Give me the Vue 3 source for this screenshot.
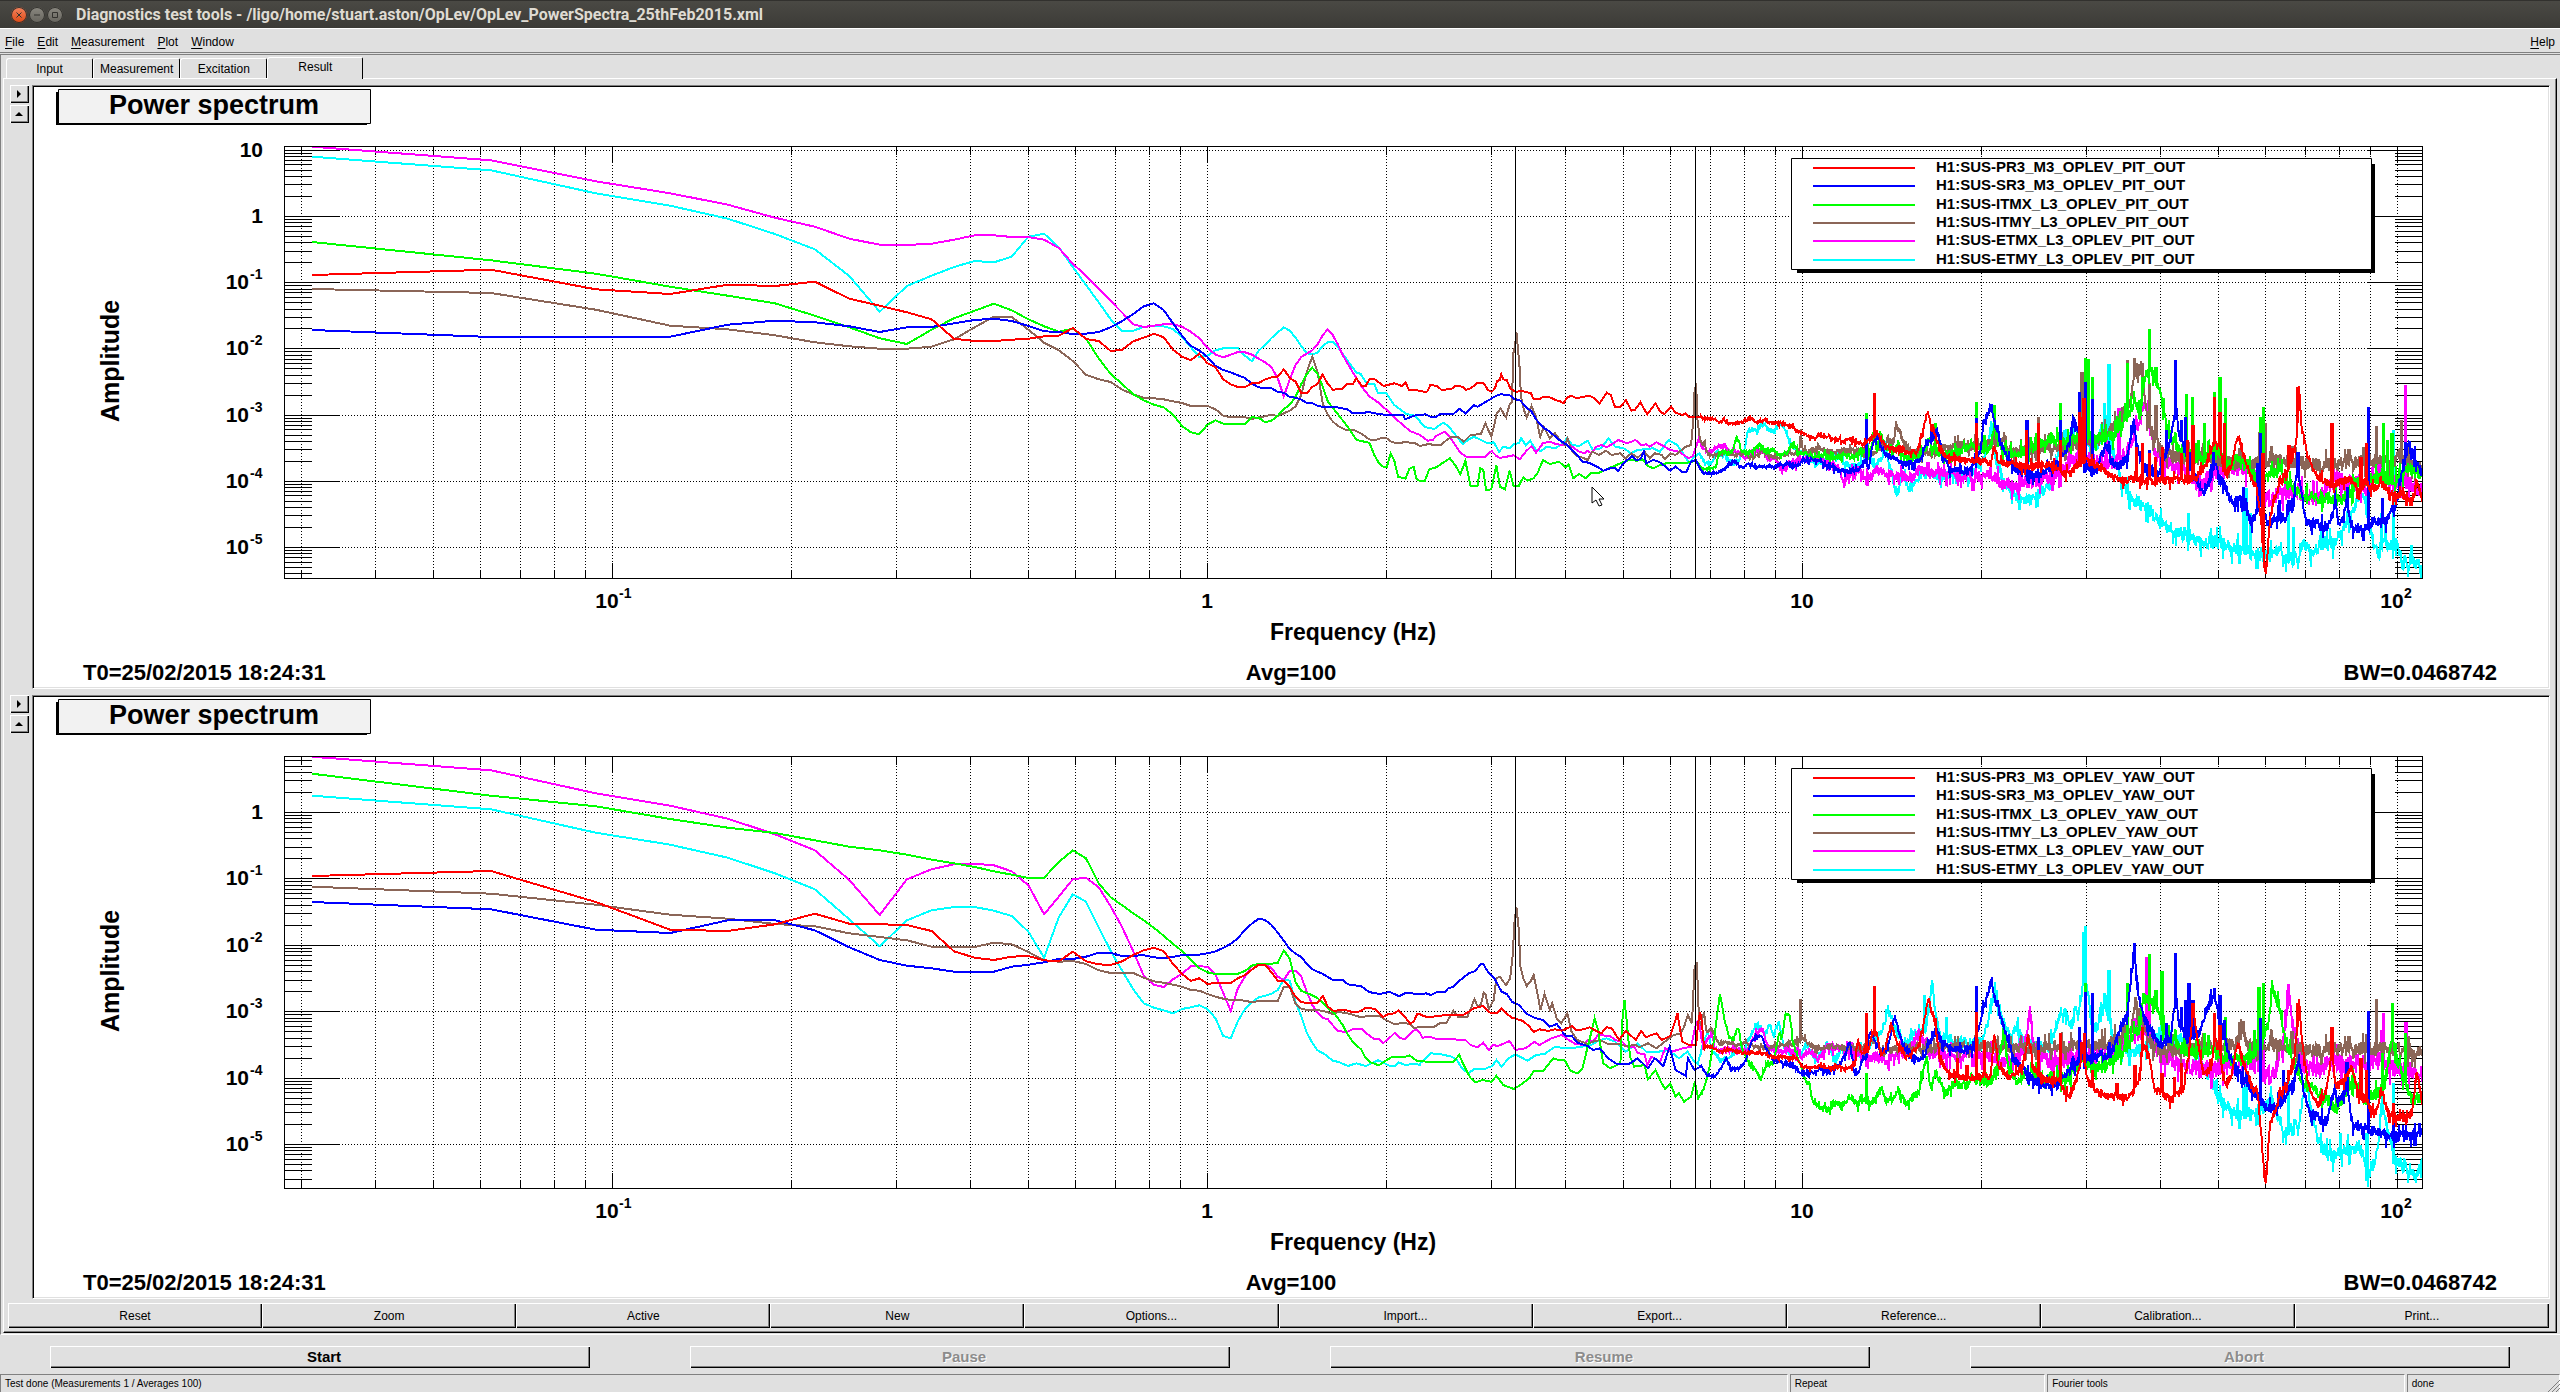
<template>
  <div class="window">
    <header class="titlebar">
      <button type="button" class="wm wm-close" aria-label="Close">
        <svg viewBox="0 0 16 16"><path d="M5.5 5.5l5 5M10.5 5.5l-5 5" /></svg>
      </button>
      <button type="button" class="wm" aria-label="Minimize">
        <svg viewBox="0 0 16 16"><path d="M5 8h6" /></svg>
      </button>
      <button type="button" class="wm" aria-label="Maximize">
        <svg viewBox="0 0 16 16"><path d="M5.500 5.500h5v5h-5z" /></svg>
      </button>
      <h1>Diagnostics test tools - /ligo/home/stuart.aston/OpLev/OpLev_PowerSpectra_25thFeb2015.xml</h1>
    </header>

    <nav class="menubar">
      <button v-for="m in menus" :key="m" type="button"><u>{{ m[0] }}</u>{{ m.slice(1) }}</button>
      <button type="button" class="help"><u>H</u>elp</button>
    </nav>

    <main class="work">
      <div class="tabs" role="tablist">
        <button
          v-for="t in tabs"
          :key="t"
          type="button"
          role="tab"
          :aria-selected="t === tab"
          :class="['tab', { active: t === tab }]"
          @click="tab = t"
        >
          {{ t }}
        </button>
      </div>

      <section class="panel">
        <div v-for="plot in plots" :key="plot.axis" class="row">
          <div class="side">
            <button type="button" class="bevel" aria-label="Expand right">
              <svg viewBox="0 0 19 18"><path d="M7 5v8l4-4z" /></svg>
            </button>
            <button type="button" class="bevel" aria-label="Expand up">
              <svg viewBox="0 0 19 18"><path d="M5 11h8L9 7z" /></svg>
            </button>
          </div>

          <div class="canvas">
            <svg viewBox="34 87 2514 600" role="img" :aria-label="'Power spectrum ' + plot.axis">
              <g class="title">
                <path class="shade" d="M56 92h311v33H56z" />
                <path class="box" d="M58.500 89.500h312v34h-312z" />
                <text x="214" y="114" text-anchor="middle">Power spectrum</text>
              </g>

              <g class="crisp">
                <path class="grid" :d="plot.grid" />
                <path class="frame" :d="plot.ticks" />
                <path
                  v-for="s in plot.traces"
                  :key="s.name"
                  class="trace"
                  :stroke="s.color"
                  :d="s.d"
                />
                <path class="frame" d="M1515.500 146V579M1695.500 146V579" />
                <path class="frame" d="M284.500 146.500H2422.500V578.500H284.500z" />
              </g>

              <g class="axis">
                <text v-for="l in plot.yLabels" :key="l.y" :x="l.sup ? 249 : 263" :y="l.y + 7" text-anchor="end">{{ l.text }}</text>
                <text v-for="l in plot.yLabels.filter((v) => v.sup)" :key="l.sup" class="sup" x="250" :y="l.y - 3">{{ l.sup }}</text>
                <text x="607" y="608" text-anchor="middle">10</text>
                <text class="sup" x="619" y="598">-1</text>
                <text x="1207" y="608" text-anchor="middle">1</text>
                <text x="1802" y="608" text-anchor="middle">10</text>
                <text x="2392" y="608" text-anchor="middle">10</text>
                <text class="sup" x="2404" y="598">2</text>
              </g>

              <g class="caption">
                <text class="name" x="1353" y="640" text-anchor="middle">Frequency (Hz)</text>
                <text class="name-y" transform="translate(119 361) rotate(-90)" text-anchor="middle">Amplitude</text>
                <text x="83" y="680">T0=25/02/2015 18:24:31</text>
                <text x="1291" y="680" text-anchor="middle">Avg=100</text>
                <text x="2497" y="680" text-anchor="end">BW=0.0468742</text>
              </g>

              <g class="legend">
                <path class="shade" d="M1797 164h578v109h-578z" />
                <path class="box" d="M1791.500 158.500h580v111h-580z" />
                <template v-for="(s, i) in plot.legend" :key="s.name">
                  <path class="trace crisp" :stroke="s.color" :d="`M1813 ${legendRows[i]}h102`" />
                  <text x="1936" :y="legendRows[i] + 4">{{ s.name }}</text>
                </template>
              </g>

              <path
                v-if="plot.axis === 'PIT'"
                class="pointer"
                d="M1592 487v16l4-3 3 6 3-1-3-6h5z"
              />
            </svg>
          </div>
        </div>

        <div class="tools">
          <button v-for="b in tools" :key="b" type="button" class="bevel">{{ b }}</button>
        </div>
      </section>
    </main>

    <div class="actions">
      <button type="button" class="bevel">Start</button>
      <button type="button" class="bevel" disabled>Pause</button>
      <button type="button" class="bevel" disabled>Resume</button>
      <button type="button" class="bevel" disabled>Abort</button>
    </div>

    <footer class="status">
      <span>Test done (Measurements 1 / Averages 100)</span>
      <span>Repeat</span>
      <span>Fourier tools</span>
      <span>done</span>
      <svg class="grip" viewBox="0 0 14 14"><path d="M2 14L14 2M6 14l8-8M10 14l4-4" /></svg>
    </footer>
  </div>
</template>

<script setup>
import { ref } from 'vue'

const menus = ['File', 'Edit', 'Measurement', 'Plot', 'Window']
const tabs = ['Input', 'Measurement', 'Excitation', 'Result']
const tab = ref('Result')
const tools = ['Reset', 'Zoom', 'Active', 'New', 'Options...', 'Import...', 'Export...', 'Reference...', 'Calibration...', 'Print...']

const channels = [
  { id: 'PR3_M3', color: '#ff0000' },
  { id: 'SR3_M3', color: '#0000ff' },
  { id: 'ITMX_L3', color: '#00ff00' },
  { id: 'ITMY_L3', color: '#8b6658' },
  { id: 'ETMX_L3', color: '#ff00ff' },
  { id: 'ETMY_L3', color: '#00ffff' }
]
const legendRows = [168, 186, 205, 223, 241, 260]

const DECADE = 595
const xOf = (f) => 1207.5 + DECADE * Math.log10(f)

// Each trace is: one value per 31.25 mHz bin up to 1.5 Hz, then x,y lists
// for the bands b, c and d, then narrow peaks in bands c and d.
const bands = {
  b: { x: 860, k: 2.8 },
  c: { x: 1400, k: 2.904 },
  d: { x: 1930, k: 2.487 }
}

const pit = [
  {
    low: '435 419 478 492 464 468 455 506 527 547 568 626 633 633 629 626 619 617 594 627 633 663 659 634 623 611 622 659 680 691 671 700 712 748 763 771 771 760 759 748 742 740 718 744 755 789 789 771',
    b: '1281,762 1295,734 1310,762 1324,779 1351,776 1364,763 1380,762 1390,745 1405,768 1416,768 1426,748 1440,747 1466,768 1496,760 1518,768 1527,757 1537,779 1568,782',
    c: '72,786 80,784 88,765 108,768 120,779 148,778 160,768 182,770 192,779 205,775 225,759 242,758 255,779 266,786 276,775 282,753 290,750 294,733 300,748 310,750 320,775 336,786 352,782 380,790 388,808 405,808 415,800 440,803 452,811 462,812 475,820 485,803 498,797 512,805 550,797 565,805 580,820 600,788 612,795 624,830 640,830 656,811 672,842 682,840 698,817 718,853 742,820 756,845 768,852 788,830 800,848 820,855 830,850 838,860 875,860 885,866 915,866 928,877 940,868 955,882 985,877 1000,872 1015,865 1035,876 1060,870 1080,880 1115,880 1130,888 1140,887 1150,900 1165,905 1175,912 1190,920 1205,927 1215,915 1230,922 1245,920 1262,930 1275,925 1285,935 1310,928 1325,940 1352,940 1368,925 1385,905 1395,925 1410,945 1430,955 1450,962 1470,965 1500,965 1512,930 1520,900 1532,845 1540,880 1545,905',
    d: '8,900 15,930 30,970 50,985 80,990 110,990 150,1000 160,940 170,998 200,1000 230,1010 260,1008 300,1000 330,1030 350,1030 370,1000 385,990 410,1005 430,1015 450,1040 480,1050 520,1050 560,1055 600,1050 640,1050 665,1040 680,1015 695,980 703,940 712,930 722,950 735,1040 750,1000 765,915 775,950 790,1020 810,1070 822,1150 834,1345 845,1180 855,1110 875,1050 895,1000 910,950 918,790 925,900 940,980 960,1030 985,1060 1010,1060 1045,1045 1065,1085 1080,1060 1100,1075 1128,1065 1150,1095 1180,1100 1205,1100 1212,1055 1224,1110',
    pc: '1377,790',
    pd: '116,880 240,900 269,878 325,930 371,845 376,860 383,805 513,950 528,940 545,970 561,980 578,950 625,970 640,930 654,885 692,970 708,800 721,845 733,880 828,970 893,945 915,772 1000,880 1072,980 1086,940',
    noise: 0.8
  },
  {
    low: '600 621 621 620 584 572 577 589 606 592 591 580 570 566 573 588 604 606 612 611 606 592 573 552 529 520 540 580 618 648 661 681 708 720 727 736 744 761 772 775 775 786 788 801 803 809 819 819',
    b: '1281,827 1296,831 1330,831 1364,838 1380,850 1400,850 1425,846 1450,852 1480,855 1520,855 1527,868 1550,857 1568,855',
    c: '75,853 88,860 105,860 118,852 155,852 172,836 190,850 215,826 225,830 250,815 262,808 278,798 292,793 318,795 330,806 350,812 362,827 382,845 395,868 415,892 435,905 460,928 485,945 510,970 530,995 548,998 572,1010 590,1022 610,1015 622,1013 634,1023 645,1005 660,990 675,978 685,990 698,988 708,965 715,1000 735,990 752,995 765,1005 785,1022 800,1010 820,1026 832,1025 845,995 860,990 870,1015 880,1030 920,1030 945,1015 960,1000 975,993 985,1010 1000,1010 1012,1000 1030,1010 1060,1012 1085,1008 1105,1005 1130,1000 1140,1010 1155,1005 1170,992 1205,988 1225,998 1240,1010 1270,1018 1300,1025 1320,1022 1340,1012 1350,990 1362,1010 1375,930 1390,920 1395,950 1410,975 1440,990 1470,1000 1495,1000 1515,985 1528,940',
    d: '5,930 18,905 30,970 50,1020 100,1025 125,960 135,870 150,835 160,870 175,940 195,990 220,1025 260,1035 290,1020 320,1000 345,950 360,870 368,900 385,1010 410,1030 425,990 437,935 450,990 470,1015 490,980 500,920 508,870 515,950 530,1010 570,1030 588,970 603,900 610,830 618,900 630,950 650,1020 680,1090 695,1050 710,1000 725,1050 750,1110 775,1110 800,1175 825,1110 840,1190 860,1160 885,1165 905,1100 915,1000 925,1100 935,1175 985,1190 1000,1160 1008,1110 1018,1200 1035,1120 1050,1190 1085,1200 1100,1170 1130,1180 1150,1140 1165,1090 1180,1000 1190,940 1205,980 1224,1040',
    pc: '1354,867 1545,900',
    pd: '116,865 241,870 325,870 371,785 386,755 405,808 546,960 588,900 610,690 625,870 636,860 644,965 705,965 779,1070 815,1000 822,910 870,1110 893,1110 915,965 1038,1070 1090,830 1126,1105 1183,935',
    noise: 1
  },
  {
    low: '336 391 431 470 497 520 557 592 625 642 599 565 542 521 541 568 589 605 596 626 685 732 762 793 811 824 832 854 888 907 913 884 871 881 881 881 881 862 863 877 872 857 838 824 800 762 732 713',
    b: '1281,731 1296,771 1310,815 1337,851 1364,888 1390,930 1426,938 1440,975 1452,998 1466,1011 1475,1011 1486,970 1496,992 1507,1040 1527,1046 1538,1017 1550,1010 1558,1045 1568,1054',
    c: '72,1052 85,1018 105,1012 125,998 145,985 160,1005 175,1032 190,993 205,1068 225,1068 233,1015 242,1020 250,1080 265,1078 280,1005 290,1070 305,1078 318,1022 330,1068 345,1068 358,1042 370,1052 388,1045 400,1028 415,990 435,1002 462,995 480,1012 490,1003 503,1045 520,1032 540,1045 555,1030 575,1030 600,1018 640,1000 665,990 690,992 705,988 720,1008 735,1015 755,1005 780,998 805,1000 835,998 860,992 880,1018 905,1015 918,1010 925,970 940,965 955,970 968,960 980,915 990,960 1005,970 1020,965 1045,945 1060,968 1085,960 1100,975 1125,970 1140,940 1155,970 1180,970 1205,985 1230,975 1260,985 1290,975 1320,985 1340,960 1365,970 1378,900 1385,960 1395,905 1410,950 1430,970 1445,935 1460,980 1485,985 1510,975 1525,960 1535,920',
    d: '5,950 30,975 60,970 95,955 130,960 150,960 160,880 180,960 200,970 240,965 270,940 300,925 340,940 360,925 395,920 430,925 455,920 470,890 485,860 500,840 510,820 525,830 535,740 550,710 565,770 575,800 590,900 610,950 640,970 680,990 700,970 720,970 740,1010 765,990 790,1010 815,1050 840,1040 870,1020 890,1060 930,1100 970,1105 1010,1110 1035,1100 1060,1060 1090,1050 1120,1040 1160,1050 1190,1010 1210,1030 1224,1030',
    pc: '1354,848',
    pd: '13,880 116,815 136,915 161,826 325,818 386,685 393,688 405,740 492,700 529,740 546,598 562,712 637,793 653,800 668,930 682,880 707,785 721,740 734,805 822,860 829,832 1128,880 1137,930 1149,910',
    noise: 1.2
  },
  {
    low: '477 489 539 587 598 616 637 649 656 656 650 628 592 560 561 599 638 661 693 734 748 756 779 793 803 805 808 814 819 828 827 828 838 857 862 861 862 867 862 859 854 858 850 842 829 795 725 680',
    b: '1281,725 1296,823 1310,855 1324,875 1340,889 1360,900 1385,901 1402,910 1426,928 1440,931 1462,923 1474,924 1490,937 1510,940 1525,936 1555,940 1568,948',
    c: '80,943 120,945 135,930 150,920 170,922 185,935 205,915 235,912 248,880 265,920 275,880 280,852 292,836 308,862 318,825 325,815 330,660 334,650 338,605 342,650 348,720 351,800 360,840 368,862 382,828 395,860 407,920 418,890 435,925 450,910 465,930 480,945 486,925 500,965 515,978 530,983 545,990 558,965 578,975 598,962 615,975 640,970 655,985 672,970 690,983 710,965 725,985 740,970 760,975 770,988 785,970 800,975 818,960 830,950 845,945 852,870 855,790 860,760 864,870 870,920 878,950 885,925 888,965 900,975 925,975 945,965 965,975 1000,970 1025,985 1050,965 1090,985 1115,975 1150,970 1160,960 1164,910 1170,960 1190,965 1215,950 1240,965 1270,965 1290,960 1320,965 1350,960 1375,975 1400,945 1415,930 1435,940 1440,880 1450,900 1462,935 1480,960 1510,975 1530,960',
    d: '5,970 40,955 90,945 130,950 180,930 195,970 240,960 280,950 330,950 380,945 430,920 460,890 480,850 498,820 508,740 518,710 530,760 540,860 555,920 575,960 610,980 680,985 740,1000 800,1000 880,990 940,1000 1000,1005 1060,1000 1100,990 1150,995 1170,980 1224,1020',
    pc: '',
    pd: '269,862 378,725 386,725 492,690 508,685 529,700 546,760 562,825 819,905 834,880 1078,950 1110,888 1173,870',
    noise: 1.3
  },
  {
    low: '50 91 154 190 224 263 290 326 344 345 341 329 316 316 321 321 329 354 401 437 476 513 548 583 591 587 583 582 590 605 625 653 674 682 674 666 667 674 686 697 712 745 799 748 705 681 671 661',
    b: '1281,643 1296,615 1309,599 1324,616 1337,641 1351,674 1377,722 1402,766 1426,799 1450,817 1474,839 1496,862 1518,883 1540,903 1568,915',
    c: '80,932 95,930 105,918 130,905 145,920 160,945 175,968 195,982 245,982 266,963 280,978 290,984 330,976 348,988 365,965 382,948 395,968 415,940 435,935 455,943 480,945 500,950 520,965 535,970 545,962 555,970 570,950 585,945 600,952 620,940 634,930 660,940 684,930 700,945 715,943 725,950 745,937 765,948 785,960 810,965 838,985 850,978 860,950 868,925 880,955 895,965 905,965 925,945 945,950 955,965 980,965 1000,985 1015,970 1040,960 1055,965 1070,990 1090,985 1105,1015 1125,1015 1140,990 1150,1005 1165,985 1200,985 1225,985 1240,1000 1260,1000 1275,1015 1288,1065 1300,1040 1330,1015 1345,1040 1370,1040 1385,1015 1400,1025 1420,1035 1450,1035 1490,1045 1510,1015 1530,1030',
    d: '5,1030 60,1030 110,1045 150,1030 180,1060 215,1070 250,1050 290,1045 330,1020 360,990 400,990 440,1000 470,990 500,950 520,880 535,820 548,900 560,970 590,1000 640,1020 670,1080 700,1030 740,1010 800,1020 830,1110 870,1090 910,1080 960,1110 1010,1050 1060,1060 1090,1080 1120,1020 1150,1060 1180,1050 1224,1080',
    pc: '',
    pd: '438,920 470,835 1100,1010 1128,880 1183,765',
    noise: 1.5
  },
  {
    low: '80 121 190 227 266 312 358 438 545 468 437 411 393 397 380 320 311 352 411 465 517 568 603 602 591 587 589 597 621 652 681 677 661 655 653 655 677 694 662 644 624 607 592 602 623 648 670 673',
    b: '1281,668 1296,647 1310,637 1324,636 1337,650 1364,690 1389,727 1402,732 1420,762 1440,762 1450,789 1474,790 1496,825 1530,852 1550,856 1568,872',
    c: '60,880 75,892 100,897 125,878 140,888 152,903 165,920 182,942 200,928 215,920 235,930 255,940 272,937 288,965 300,950 318,955 330,942 345,940 352,925 365,945 378,932 395,960 410,963 425,950 450,955 470,942 485,925 500,945 520,948 545,932 560,960 585,955 605,925 625,950 650,955 670,970 690,960 710,958 735,955 755,965 780,930 805,945 825,975 840,1000 855,980 870,970 885,1000 905,1000 920,965 945,980 965,1000 985,990 1000,960 1010,905 1025,895 1035,905 1048,885 1060,880 1072,900 1090,905 1100,878 1115,890 1125,920 1135,945 1150,960 1170,965 1190,985 1215,1000 1240,985 1270,975 1300,1005 1330,1010 1345,990 1360,960 1375,1010 1395,990 1410,955 1425,1010 1437,1080 1448,1085 1460,1020 1475,1075 1495,1060 1510,1035',
    d: '5,1030 20,1045 60,1030 100,1040 140,970 155,890 165,1000 185,1060 215,1100 245,1110 270,1090 300,1060 320,960 332,895 350,920 370,880 385,940 410,950 440,900 455,960 475,1050 505,1110 540,1130 575,1180 610,1200 650,1220 680,1240 720,1235 750,1255 780,1255 800,1270 850,1275 870,1250 885,1280 910,1285 930,1235 950,1270 975,1240 1005,1240 1030,1190 1055,1130 1070,1090 1085,1110 1095,1200 1115,1275 1130,1230 1145,1250 1160,1230 1175,1300 1195,1290 1215,1300 1224,1320',
    pc: '',
    pd: '377,790 433,820 445,703 642,1150 779,1090 786,1075 797,1150 892,1110 905,1190 1123,1150 1133,1180 1152,900 1198,1245',
    noise: 1.3
  }
]

const yaw = [
  {
    low: '408 393 486 569 573 553 521 551 553 555 573 634 653 660 650 648 661 664 635 664 673 675 664 645 631 623 633 672 702 723 715 732 729 729 729 715 705 689 674 675 697 722 722 742 771 786 789 789',
    b: '1281,789 1296,768 1310,800 1325,812 1360,810 1380,817 1402,814 1414,804 1440,806 1464,831 1480,822 1496,820 1508,811 1525,829 1540,851 1550,845 1560,823 1568,822',
    c: '62,825 80,832 110,828 140,824 185,824 215,805 240,798 262,818 282,818 295,805 308,820 325,833 355,842 375,858 388,876 405,868 430,873 450,868 470,872 500,858 510,870 535,868 550,862 575,875 585,880 600,862 615,865 636,900 655,873 685,900 700,873 715,892 730,885 745,880 760,900 785,888 797,850 806,820 812,860 820,905 840,915 860,915 866,850 872,812 878,860 882,920 905,920 930,935 960,930 1000,938 1050,938 1070,945 1090,955 1115,948 1130,955 1150,950 1170,980 1195,985 1220,978 1245,985 1270,978 1300,988 1320,975 1330,900 1340,940 1350,930 1360,940 1370,880 1385,880 1395,940 1405,940 1425,850 1435,880 1448,925 1470,950 1490,935 1510,905 1525,830 1535,775',
    d: '0,800 12,850 25,960 50,1005 90,1015 130,1010 150,1010 160,870 170,980 200,1015 230,980 245,880 255,980 280,1015 320,1020 345,1075 365,1020 380,920 390,1020 420,1060 450,1070 500,1070 520,1020 530,910 540,930 560,1050 600,1080 630,1050 645,930 655,800 665,900 680,1000 700,980 708,880 720,930 735,1040 750,1000 765,905 780,970 800,1040 815,1060 825,1200 834,1345 845,1160 870,1070 890,1020 905,970 918,800 930,960 945,1050 965,1090 985,1060 1000,930 1010,1040 1030,1020 1048,980 1065,1060 1090,1090 1105,1125 1125,1060 1140,1120 1175,1140 1200,1100 1212,1000 1224,1090',
    pc: '1354,820 1377,738',
    pd: '13,835 68,955 92,975 116,815 135,900 269,930 325,880 378,905 383,880 405,990 465,1030 510,975 529,860 577,1000 608,1010 625,970 654,790 707,820 721,855 893,990 915,788 1000,862 1072,955 1086,990 1153,1090',
    noise: 0.8
  },
  {
    low: '486 508 569 579 541 541 571 622 660 677 685 695 696 695 680 674 667 657 657 650 638 639 648 647 646 652 655 651 645 645 644 640 634 624 611 595 569 551 536 540 555 578 602 627 641 651 672 688',
    b: '1296,702 1324,720 1351,719 1366,733 1404,739 1425,756 1455,762 1484,756 1510,769 1527,759 1568,762',
    c: '62,763 75,760 90,765 105,757 130,756 140,745 155,740 175,720 200,700 218,693 235,672 242,672 255,695 275,717 295,755 310,762 325,785 345,795 370,823 395,835 415,840 435,860 455,852 480,887 498,887 515,908 545,918 560,930 580,925 605,955 630,972 665,972 690,955 720,985 740,955 765,978 783,920 800,990 830,1008 836,955 855,990 875,978 890,1005 915,1010 935,980 948,955 960,988 985,985 1005,960 1020,905 1035,890 1050,890 1065,930 1085,960 1120,970 1145,980 1165,1000 1190,1000 1220,990 1250,997 1275,975 1295,940 1305,900 1320,1005 1335,990 1345,950 1355,960 1362,880 1375,890 1395,940 1415,930 1430,860 1437,830 1450,880 1465,920 1500,960 1525,950 1535,900',
    d: '0,910 15,870 30,910 60,930 110,930 125,840 140,770 152,730 165,790 185,870 210,960 240,1000 270,1030 310,1040 350,990 375,950 395,960 420,950 450,940 470,880 490,820 500,720 508,620 518,760 530,830 550,870 575,920 600,890 607,800 612,790 620,850 640,900 670,880 690,800 706,770 722,830 740,930 770,1000 810,1060 840,1110 880,1080 905,1020 918,950 930,1060 945,1120 985,1145 1005,1050 1015,1090 1038,1040 1050,1150 1080,1165 1105,1170 1140,1190 1180,1190 1224,1180',
    pc: '',
    pd: '116,738 269,890 371,860 386,755 405,760 508,608 546,860 588,850 610,640 625,800 635,780 644,728 654,780 707,745 721,765 733,840 822,835 879,990 1037,965 1090,813 1153,1130 1217,1150',
    noise: 1
  },
  {
    low: '101 167 199 237 263 279 301 320 331 344 359 370 381 394 404 414 413 366 331 355 430 472 496 520 541 563 587 612 633 660 684 697 702 702 702 701 693 677 671 671 671 668 631 657 727 753 759 766',
    b: '1281,774 1310,803 1330,823 1351,854 1364,880 1380,906 1404,929 1414,950 1427,966 1452,976 1474,961 1490,950 1525,951 1538,946 1560,963',
    c: '60,963 90,967 155,965 172,945 185,975 205,1015 220,1027 240,1020 265,1025 280,1008 300,1035 330,1047 350,1035 372,1018 390,992 415,993 430,975 445,955 460,960 478,960 495,992 515,1000 530,985 545,920 555,880 565,835 575,870 590,970 610,985 640,970 645,850 652,780 658,840 668,950 680,980 710,975 720,1018 742,990 760,1030 770,1048 785,1030 800,1070 810,1060 825,1085 845,1070 856,1025 866,1075 885,1040 900,975 912,900 920,830 930,760 940,830 955,890 970,900 982,855 992,920 1010,965 1030,985 1047,1020 1065,975 1085,970 1100,880 1110,890 1120,820 1132,830 1145,930 1165,980 1180,1030 1190,1020 1192,1070 1210,1100 1245,1108 1265,1090 1290,1095 1305,1070 1330,1095 1340,1070 1365,1095 1385,1065 1400,1040 1410,1085 1430,1080 1445,1045 1470,1095 1490,1070 1505,1060 1518,1000 1530,950',
    d: '0,1040 15,1000 40,1060 60,1030 90,1040 110,1020 150,1030 170,970 183,870 195,980 215,1020 240,1000 290,1010 340,1020 380,960 400,980 440,980 470,940 495,910 515,870 530,790 545,770 560,790 575,850 590,890 620,920 660,940 700,930 740,960 790,960 810,930 830,890 842,850 852,745 865,790 880,880 900,960 930,1030 970,1060 1010,1110 1030,1060 1050,1020 1080,1080 1110,1060 1130,1040 1150,870 1160,960 1200,1080 1224,1070',
    pc: '1354,1000',
    pd: '325,935 386,728 492,728 530,760 546,643 562,750 577,692 634,880 682,880 734,830 808,870 818,742 829,728 1126,940 1150,788 1183,880',
    noise: 1.2
  },
  {
    low: '440 461 494 524 536 552 559 580 591 601 620 621 621 608 613 636 661 665 663 672 691 699 699 699 713 724 728 734 740 750 752 762 770 776 780 780 782 787 783 783 783 783 740 740 792 806 810 810',
    b: '1296,812 1324,822 1340,816 1370,821 1400,831 1430,828 1456,828 1474,841 1496,852 1525,849 1540,852 1552,865 1568,860',
    c: '75,862 100,860 115,850 135,848 155,812 170,832 195,832 208,800 216,778 225,798 235,795 243,758 248,762 258,808 272,780 280,715 290,710 300,725 308,735 320,715 328,640 332,550 338,500 345,570 350,680 358,715 368,738 380,722 388,705 400,765 408,810 420,762 435,810 442,790 455,835 468,850 486,820 498,875 515,900 545,912 560,905 580,900 605,912 640,912 655,918 685,915 695,922 720,910 745,925 775,900 795,885 815,880 825,860 836,825 848,850 855,690 861,665 865,740 868,840 875,860 882,808 890,880 905,865 925,910 950,905 980,915 1005,908 1030,920 1065,925 1100,915 1140,915 1160,900 1168,890 1190,915 1220,925 1260,918 1300,925 1350,925 1370,905 1400,925 1430,930 1470,920 1510,925',
    d: '0,925 100,920 200,925 300,920 400,915 450,910 470,890 485,870 500,880 510,790 520,820 535,870 555,920 620,930 700,920 760,915 778,870 790,915 850,915 900,920 950,930 1000,925 1050,935 1080,925 1130,925 1224,940',
    pc: '1163,778',
    pd: '480,850 512,770 780,843 1090,870 1110,778 1150,890',
    noise: 1.3
  },
  {
    low: '50 91 160 197 236 283 331 420 525 418 388 373 371 376 394 436 523 470 418 413 442 499 562 633 707 734 741 718 701 679 679 680 704 758 813 745 710 678 671 672 684 710 720 692 692 710 755 795',
    b: '1281,818 1296,834 1310,838 1337,873 1364,876 1380,867 1404,866 1420,882 1440,897 1452,897 1464,910 1480,896 1497,879 1510,893 1525,898 1545,876 1556,868 1568,878',
    c: '65,893 85,890 110,898 150,898 190,900 205,915 225,922 242,908 258,930 270,915 285,918 318,903 335,930 365,925 390,905 405,915 440,895 470,885 490,900 510,912 535,915 545,900 560,905 575,885 610,888 625,900 645,905 660,920 680,920 690,940 710,942 718,975 730,950 755,965 770,925 790,935 820,925 845,920 860,850 868,840 880,920 905,880 915,930 945,930 985,930 1010,930 1035,880 1052,865 1068,920 1090,935 1120,930 1140,935 1165,950 1190,930 1215,960 1240,920 1265,920 1295,930 1330,940 1360,955 1390,950 1415,965 1440,940 1480,930 1508,880 1530,930',
    d: '0,940 60,950 100,935 150,950 200,970 235,930 248,805 260,930 290,960 350,960 400,950 440,940 470,920 500,900 525,880 540,870 560,920 580,950 620,970 680,990 740,980 800,970 835,1010 860,990 880,900 892,760 905,870 925,970 960,990 1000,970 1060,970 1100,970 1120,960 1150,980 1180,980 1224,1000',
    pc: '',
    pd: '538,652 545,690 829,900 892,732 1122,870 1128,820 1184,845',
    noise: 1.7
  },
  {
    low: '167 208 278 314 353 400 448 538 619 541 511 501 501 512 528 575 653 532 463 485 562 633 692 748 790 803 811 820 807 802 796 807 835 888 895 843 807 787 772 767 761 750 718 722 788 829 878 908',
    b: '1281,931 1300,942 1324,962 1340,966 1366,978 1390,970 1416,978 1450,961 1462,966 1484,978 1497,978 1508,967 1527,975 1550,972 1568,974',
    c: '60,968 70,960 88,940 120,943 150,950 165,960 180,985 198,1000 215,988 245,987 268,978 280,960 295,980 315,955 335,943 370,962 395,945 420,942 450,920 480,925 520,922 555,915 580,900 600,895 625,905 655,935 690,910 715,935 750,935 780,930 810,955 835,935 855,965 865,972 880,910 895,875 905,930 930,960 955,955 975,930 1000,930 1020,880 1035,855 1050,865 1060,880 1073,850 1085,890 1100,845 1115,920 1140,950 1165,940 1180,915 1210,960 1240,910 1260,960 1290,920 1320,935 1350,925 1375,900 1395,880 1410,840 1418,800 1430,840 1445,880 1465,920 1490,880 1515,880 1530,860 1538,790',
    d: '5,720 12,810 25,890 60,900 100,910 130,900 150,820 162,740 170,820 185,850 200,890 215,860 235,900 260,910 290,930 305,900 320,830 335,800 350,860 360,820 375,780 385,700 395,780 410,870 425,830 435,790 445,830 455,900 480,920 500,935 520,930 560,890 600,890 640,900 680,980 700,1020 720,1080 760,1120 800,1120 830,1100 850,1080 880,1170 905,1165 920,1130 935,1020 950,1120 970,1220 1000,1250 1030,1230 1070,1220 1090,1300 1110,1250 1125,1100 1145,1200 1160,1260 1190,1285 1210,1310 1224,1260',
    pc: '1523,765',
    pd: '42,830 325,820 381,575 386,557 433,760 445,690 570,860 779,1040 786,1030 892,1010 1020,1180 1087,1180 1126,1060 1152,1030',
    noise: 1.3
  }
]

const yOf = (v) => 130 + v / 3

function readBand(text, { x, k }) {
  if (!text) return []
  return text.split(' ').map((p) => {
    const [a, b] = p.split(',').map(Number)
    return [x + a / k, yOf(b)]
  })
}

function tracePath(t, seed) {
  const pts = [
    ...t.low.split(' ').map((v, i) => [xOf((i + 1) / 32), yOf(+v)]),
    ...readBand(t.b, bands.b),
    ...readBand(t.c, bands.c),
    ...readBand(t.d, bands.d)
  ]
  const peaks = [...readBand(t.pc, bands.c), ...readBand(t.pd, bands.d)]

  let s = seed
  const rand = () => {
    s = (s * 1103515245 + 12345) % 2147483648
    const v = (s / 2147483648) * 2 - 1
    // a few samples stray well outside the band
    return Math.abs(v) > 0.93 ? v * 2 : v
  }

  const out = pts.filter((p) => p[0] < 1700)
  // Above ~7 Hz the bins get denser than the pixels: fill column by column
  let i = 0
  for (let x = 1700; x <= 2422; x++) {
    while (i < pts.length - 2 && pts[i + 1][0] < x) i++
    const [x0, y0] = pts[i]
    const [x1, y1] = pts[i + 1]
    const y = y0 + (y1 - y0) * Math.min(1, Math.max(0, (x - x0) / (x1 - x0 || 1)))
    const amp = t.noise * (1 + Math.min(1, (x - 1700) / 400) * 5)
    out.push([x, y + rand() * amp])
    const peak = peaks.find((p) => Math.abs(p[0] - x) < 1.1)
    if (peak) out.push([x, peak[1]])
    out.push([x, y + rand() * amp])
  }
  return 'M' + out.map(([x, y]) => `${x.toFixed(1)} ${Math.min(y, 578).toFixed(1)}`).join('L')
}

// y1 is the pixel row of amplitude 1
function axisPaths(y1, step) {
  let grid = ''
  let ticks = ''
  for (let e = -2; e <= 2; e++) {
    for (let m = 1; m < 10; m++) {
      const x = Math.floor(xOf(m * 10 ** e)) + 0.5
      if (x < 285 || x > 2422) continue
      const len = m === 1 ? 16 : 9
      grid += `M${x} 147V578`
      ticks += `M${x} 146v${len}M${x} 579v${-len}`
    }
  }
  for (let e = -6; e <= 1; e++) {
    for (let m = 1; m < 10; m++) {
      const y = Math.round(y1 - step * (e + Math.log10(m))) + 0.5
      if (y < 147 || y > 578) continue
      const len = m === 1 ? 54 : 27
      if (m === 1) grid += `M339 ${y}H2368`
      ticks += `M285 ${y}h${len}M2422 ${y}h${-len}`
    }
  }
  return { grid, ticks }
}

function yLabels(y1, step, top) {
  const out = []
  for (let e = top; e >= -5; e--) {
    const y = Math.round(y1 - step * e)
    out.push(e >= 0 ? { y, text: String(10 ** e) } : { y, text: '10', sup: String(e) })
  }
  return out
}

function makePlot(axis, data, y1, step, top) {
  const legend = channels.map((c, i) => ({
    name: `H1:SUS-${c.id}_OPLEV_${axis}_OUT`,
    color: c.color,
    d: tracePath(data[i], 17 + i * 101)
  }))
  return {
    axis,
    legend,
    // first channel ends up on top
    traces: [...legend].reverse(),
    yLabels: yLabels(y1, step, top),
    ...axisPaths(y1, step)
  }
}

const plots = [makePlot('PIT', pit, 216, 66.2, 1), makePlot('YAW', yaw, 202, 66.4, 0)]
</script>

<style>
body {
  margin: 0;
}
</style>

<style scoped>
.window {
  display: flex;
  flex-direction: column;
  height: 100vh;
  min-height: 600px;
  background: #e0e0e0;
  color: #000;
  font: 12px 'Liberation Sans', Arial, sans-serif;
}

button {
  margin: 0;
  padding: 0;
  border: 0;
  background: none;
  color: inherit;
  font: inherit;
}

/* window title */
.titlebar {
  display: flex;
  align-items: center;
  gap: 2px;
  height: 28px;
  padding-left: 11px;
  background: linear-gradient(#4a4944, #3c3b37);
  border-top: 1px solid #32312e;
  box-sizing: border-box;
}
.titlebar h1 {
  margin: 0 0 0 11px;
  color: #dfdbd2;
  font: bold 16px Roboto, sans-serif;
  line-height: 20px;
}
.wm {
  width: 16px;
  height: 16px;
  border-radius: 50%;
  background: linear-gradient(#8a8880, #66645d);
  box-shadow: 0 0 0 1px #33322e inset;
}
.wm-close {
  background: linear-gradient(#f58560, #dd4814);
}
.wm svg {
  display: block;
}
.wm path {
  fill: none;
  stroke: #33322e;
}

/* menus */
.menubar {
  display: flex;
  align-items: center;
  gap: 13px;
  height: 25px;
  padding: 2px 5px 0;
  box-sizing: border-box;
  border-top: 1px solid #fff;
  border-bottom: 1px solid #808080;
}
.menubar u {
  text-underline-offset: 2px;
}
.help {
  margin-left: auto;
}

/* tabs and panel */
.work {
  display: flex;
  flex: 1;
  flex-direction: column;
  min-height: 0;
  margin-top: 1px;
  padding: 1px 3px 1px 2px;
  border-top: 1px solid #808080;
  border-left: 1px solid #808080;
  border-bottom: 1px solid #fff;
}
.tabs {
  display: flex;
  align-items: flex-end;
  height: 22px;
  padding-left: 3px;
}
.tab {
  min-width: 87px;
  height: 20px;
  padding: 0 6px;
  border-top: 1px solid #fff;
  border-left: 1px solid #fff;
  border-right: 1px solid #000;
  border-radius: 3px 2px 0 0;
}
.tab.active {
  position: relative;
  min-width: 96px;
  height: 22px;
  margin-bottom: -1px;
  padding-bottom: 3px;
  background: #e0e0e0;
}
.panel {
  display: flex;
  flex: 1;
  flex-direction: column;
  min-height: 0;
  padding: 6px 6px 4px 4px;
  border: 1px solid #fff;
  border-right-color: #000;
  border-bottom-color: #000;
  box-shadow: inset -1px -1px #808080;
}
.row {
  display: flex;
  flex: 1;
  gap: 3px;
  min-height: 0;
  padding-left: 2px;
}
.row + .row {
  margin-top: 6px;
}
.side {
  display: flex;
  flex-direction: column;
  gap: 2px;
}
.side button {
  width: 19px;
  height: 18px;
}
.side svg {
  display: block;
}
.bevel {
  box-shadow: inset 1px 1px #fff, inset -1px -1px #000, inset -2px -2px #808080;
}
.canvas {
  flex: 1;
  min-width: 0;
  border: 1px solid #808080;
  border-right-color: #fff;
  border-bottom-color: #fff;
  box-shadow: inset 1px 1px #000, inset -1px -1px #e0e0e0;
  padding: 1px;
  background: #fff;
}
.canvas svg {
  display: block;
  width: 100%;
  height: 100%;
}
.tools {
  display: grid;
  grid-template-columns: repeat(10, 1fr);
  height: 25px;
  margin-top: 4px;
  padding-right: 1px;
}

/* plot */
.crisp {
  shape-rendering: crispEdges;
}
.grid,
.frame,
.trace {
  fill: none;
}
.grid {
  stroke: #000;
  stroke-dasharray: 1 2;
}
.frame {
  stroke: #000;
}
.trace {
  stroke-width: 2;
}
.shade {
  fill: #000;
}
.box {
  fill: #fff;
  stroke: #000;
}
.title .box {
  fill: #f2f2f2;
}
.title,
.axis,
.caption,
.legend {
  font-weight: bold;
}
.title {
  font-size: 27px;
}
.axis {
  font-size: 21px;
}
.axis .sup {
  font-size: 14px;
}
.caption {
  font-size: 22px;
}
.caption .name {
  font-size: 23px;
}
.caption .name-y {
  font-size: 25px;
}
.legend {
  font-size: 15px;
}
.pointer {
  fill: #fff;
  stroke: #000;
}

/* run controls */
.actions {
  display: grid;
  grid-template-columns: repeat(4, 1fr);
  gap: 100px;
  padding: 11px 50px 6px;
}
.actions button {
  height: 22px;
  padding: 0 0 2px 8px;
  font-size: 15px;
  font-weight: bold;
}
.actions button:disabled {
  color: #8c8c8c;
  text-shadow: 1px 1px #fff;
}

.status {
  position: relative;
  display: grid;
  grid-template-columns: 70fr 10fr 14fr 6fr;
  gap: 2px;
  height: 18px;
  font-size: 10px;
  line-height: 17px;
}
.status span {
  padding-left: 4px;
  border-top: 1px solid #808080;
  border-left: 1px solid #808080;
  border-right: 1px solid #fff;
}
.grip {
  position: absolute;
  right: 0;
  bottom: 0;
  width: 14px;
  height: 14px;
  stroke: #808080;
}
</style>
